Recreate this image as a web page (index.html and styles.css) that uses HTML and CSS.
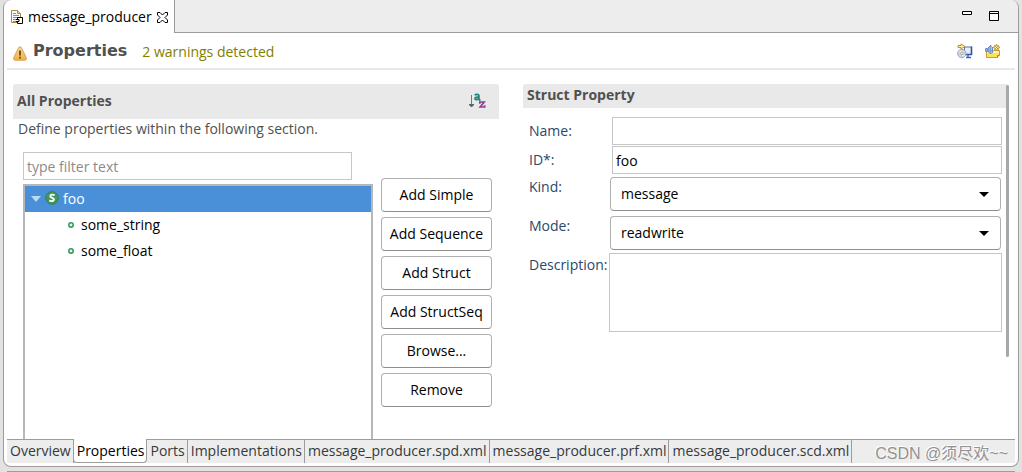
FILE: index.html
```html
<!DOCTYPE html>
<html lang="en">
<head>
<meta charset="utf-8">
<title>message_producer</title>
<link rel="stylesheet" href="styles.css">
</head>
<body>
<div class="editor">
  <div class="tabbar">
    <div class="file-tab">
      <svg class="icon-file" width="12" height="16" viewBox="0 0 12 16"><path d="M.5 1.500h6l3 3v9h-9z" fill="#f4f8ff" stroke="#b08a3c"/><path d="M6.500 1.500v3h3" fill="#f1d48b" stroke="#b08a3c"/><path d="M2 4.500h3M2 6.500h6M2 8.500h6M2 10.500h4M2 12.500h3" stroke="#6c93cf"/><path d="M6.500 8.500h5v6h-5z" fill="#fff" stroke="#000"/><path d="M5 10.500h3v2H5" fill="#fff" stroke="#000"/></svg>
      <span class="file-name">message_producer</span>
      <button class="icon-button" aria-label="Close"><svg width="11" height="11" viewBox="0 0 11 11"><path d="M.5.5h2.500l2.500 2.500L8 .5h2.500V3L8 5.500 10.500 8v2.500H8L5.500 8 3 10.500H.5V8L3 5.500.5 3z" fill="#fff" stroke="#000"/></svg></button>
    </div>
    <div class="tab-rest">
      <button class="icon-button" aria-label="Minimize"><svg width="10" height="10" viewBox="0 0 10 10"><path d="M.5.500h9v3h-9z" fill="#fff" stroke="#000"/></svg></button>
      <button class="icon-button" aria-label="Maximize"><svg width="10" height="10" viewBox="0 0 10 10"><path d="M.5.500h9v9h-9zM.5 2.500h9" fill="#fff" stroke="#000"/></svg></button>
    </div>
  </div>

  <header class="form-head">
    <svg class="icon-warning" width="14" height="15" viewBox="0 0 14 15"><defs><linearGradient id="amber" x1="0" y1="0" x2="0" y2="1"><stop offset="0" stop-color="#f8dc98"/><stop offset="1" stop-color="#f3ae45"/></linearGradient></defs><path d="M7 .8c.8 0 1.200.5 1.600 1.300l4.600 9.400c.7 1.600.1 2.700-1.400 2.700H2.200c-1.500 0-2.100-1.100-1.400-2.700l4.600-9.400C5.800 1.300 6.200.8 7 .8z" fill="url(#amber)" stroke="#dba055"/><path d="M7 4.500v5M7 10.800v1.700" stroke="#4c3a1b" stroke-width="1.600"/></svg>
    <h1 class="form-title">Properties</h1>
    <a class="warnings" href="#all">2 warnings detected</a>
    <div class="head-actions">
      <button class="icon-button" aria-label="Generate"><svg width="16" height="16" viewBox="0 0 16 16"><path d="M7.500 4h7v7.500h-7z" fill="#e5edfb" stroke="#4a78c4"/><path d="M14.500 3.500v8.500M8 11.500h7" stroke="#2a559f" stroke-width="1.600"/><path d="M11 12v2M9 14.500h5" stroke="#3768ad" stroke-width="1.400"/><circle cx="4.800" cy="10.500" r="4.200" fill="#d4d0ea" stroke="#a3a1c4"/><path d="M2.500 8l2 1.500M5.500 12l2 1" stroke="#f7f6cf" stroke-width="1.300"/><circle cx="4.800" cy="10.500" r="1.200" fill="#fff" stroke="#96ad86"/><path d="M1 4.500V2.500h3V.9l3.800 2.600L4 6V4.500z" fill="#fff0a8" stroke="#c09232"/></svg></button>
      <button class="icon-button" aria-label="Release"><svg width="16" height="16" viewBox="0 0 16 16"><path d="M1.500 7.500h13v5l-2 2h-11z" fill="#ffe34d" stroke="#cc9c28"/><path d="M2 8h10l2 1v1H2z" fill="#fff6a9"/><path d="M12.500 14.500v-2h2" fill="#fff" stroke="#b98313"/><path d="M.6 5.500h2v3h-2zM3 5l3-3v9L3 8.500z" fill="#8fb1e0" stroke="#6b90c9"/><path d="M7.500 4v6" stroke="#6b90c9"/><path d="M11.500 1l1 2.300L15 4.500l-2.500 1.200-1 2.300-1-2.300L8 4.500l2.500-1.200z" fill="#fff0a8" stroke="#c09232"/><path d="M9 2l5 5M14 2L9 7" stroke="#b58722" stroke-width=".7"/></svg></button>
    </div>
  </header>

  <main class="form-body">
    <section class="section" id="all">
      <div class="section-head section-head-tall">
        <h2 class="section-title">All Properties</h2>
        <button class="icon-button" aria-label="Sort alphabetically"><svg width="17" height="16" viewBox="0 0 17 16"><path d="M2.500 2v11" stroke="#5580a8"/><path d="M0 11h5v1L3 14H2l-2-2z" fill="#5c6478"/><path d="M5.800 2.300C6.400 1.300 9.900.8 9.900 3v4M9.900 4.200C7.500 4 6 4.500 6 5.700s2.500 1.300 3.900 0M9.900 7h1.600" fill="none" stroke="#21857c" stroke-width="1.800"/><path d="M10.800 10.800V9h4.400l-4 5h4.500v-1.800" fill="none" stroke="#8b3f98" stroke-width="1.700"/></svg></button>
      </div>
      <p class="description">Define properties within the following section.</p>
      <div class="property-area">
        <div class="tree-column">
          <input class="field filter" type="text" placeholder="type filter text" aria-label="Filter properties">
          <ul class="tree" role="tree" aria-label="Properties">
            <li class="tree-row selected" role="treeitem" aria-selected="true" aria-expanded="true">
              <svg width="10" height="6" viewBox="0 0 10 6"><path d="M0 0h10L5 6z" fill="#b9d9f5"/></svg>
              <svg class="icon-struct" width="14" height="14" viewBox="0 0 14 14"><circle cx="7" cy="7" r="6.300" fill="#43975a" stroke="#2f8250"/><path d="M9.600 4.200C8 3.200 5.300 3.500 5.300 5.200c0 2.100 3.700 1.200 3.600 3.200-.1 1.900-2.900 2.100-4.600 1.100" fill="none" stroke="#fff" stroke-width="1.900"/></svg>
              <span>foo</span>
            </li>
            <li class="tree-row child" role="treeitem"><svg width="6" height="6" viewBox="0 0 6 6"><circle cx="3" cy="3" r="2.200" fill="#e7f5ea" stroke="#2d975a" stroke-width="1.500"/></svg><span>some_string</span></li>
            <li class="tree-row child" role="treeitem"><svg width="6" height="6" viewBox="0 0 6 6"><circle cx="3" cy="3" r="2.200" fill="#e7f5ea" stroke="#2d975a" stroke-width="1.500"/></svg><span>some_float</span></li>
          </ul>
        </div>
        <div class="button-column">
          <button class="push">Add Simple</button>
          <button class="push">Add Sequence</button>
          <button class="push">Add Struct</button>
          <button class="push">Add StructSeq</button>
          <button class="push">Browse...</button>
          <button class="push">Remove</button>
        </div>
      </div>
    </section>

    <section class="section detail">
      <div class="section-head">
        <h2 class="section-title">Struct Property</h2>
      </div>
      <form class="property-form">
        <div class="form-row text-row"><label for="name">Name:</label><input class="field" id="name" type="text"></div>
        <div class="form-row text-row"><label for="ident">ID*:</label><input class="field" id="ident" type="text" value="foo"></div>
        <div class="form-row select-row"><label for="kind">Kind:</label><div class="combo"><select id="kind"><option>message</option></select></div></div>
        <div class="form-row select-row"><label for="mode">Mode:</label><div class="combo"><select id="mode"><option>readwrite</option></select></div></div>
        <div class="form-row area-row"><label for="desc">Description:</label><textarea class="field" id="desc"></textarea></div>
      </form>
      <div class="scroll-thumb"></div>
    </section>
  </main>

  <nav class="page-tabs">
    <a href="#overview">Overview</a>
    <a class="current" href="#properties">Properties</a>
    <a href="#ports">Ports</a>
    <a href="#implementations">Implementations</a>
    <a href="#spd">message_producer.spd.xml</a>
    <a href="#prf">message_producer.prf.xml</a>
    <a href="#scd">message_producer.scd.xml</a>
  </nav>
</div>
<div class="next-panel"></div>
<div class="watermark">CSDN @须尽欢~~</div>
</body>
</html>
```
FILE: styles.css
```css
* {
  box-sizing: border-box;
}

body {
  position: relative;
  display: flex;
  flex-direction: column;
  gap: 4px;
  height: 100vh;
  margin: 0;
  padding: 0 3px;
  overflow: hidden;
  background: #e2e2e2;
  color: #000;
  font: 14px/20px "Open Sans", "Noto Sans", sans-serif;
}

button,
input,
select,
textarea {
  font: inherit;
  color: inherit;
}

h1,
h2,
p,
ul {
  margin: 0;
  padding: 0;
}

svg {
  display: block;
  flex: none;
}

.editor {
  display: flex;
  flex: 1;
  flex-direction: column;
  min-height: 0;
  overflow: hidden;
  background: #fff;
  border: 1px solid #9c9c9c;
  border-top: 0;
  border-radius: 8px;
}

.next-panel {
  height: 1px;
  margin: 0 4px;
  background: #9c9c9c;
}

.icon-button {
  padding: 0;
  background: none;
  border: 0;
}

.tabbar {
  display: flex;
  flex: none;
  height: 33px;
}

.file-tab {
  display: flex;
  align-items: center;
  gap: 5px;
  padding: 1px 6px 0 7px;
}

.file-name {
  white-space: nowrap;
}

.tab-rest {
  display: flex;
  flex: 1;
  justify-content: flex-end;
  gap: 17px;
  padding: 11px 19px 0 0;
  background: #ededed;
  border: solid #9c9c9c;
  border-width: 0 0 1px 1px;
  border-radius: 0 8px 0 0;
}

.tab-rest .icon-button {
  height: 10px;
}

.form-head {
  display: flex;
  flex: none;
  align-items: center;
  height: 37px;
  margin: 0 3px;
  padding: 0 14px 0 6px;
  border-bottom: 2px solid #e8e8e8;
}

.icon-warning {
  margin-top: 6px;
}

.form-title {
  margin: 0 15px 0 6px;
  color: #505050;
  font: bold 16px/20px "DejaVu Sans", sans-serif;
}

.warnings {
  padding-top: 2px;
  color: #808000;
  text-decoration: none;
}

.head-actions {
  display: flex;
  gap: 12px;
  margin-left: auto;
}

.form-body {
  display: grid;
  flex: 1;
  grid-template-columns: 1fr 1fr;
  gap: 24px;
  min-height: 0;
  padding: 14px 9px 0;
}

.section {
  display: flex;
  flex-direction: column;
  min-height: 0;
}

.section-head {
  display: flex;
  flex: none;
  align-items: center;
  justify-content: space-between;
  height: 24px;
  padding: 0 13px 2px 4px;
  background: #e9e9e9;
  border-radius: 3px 3px 0 0;
}

.section-head-tall {
  height: 35px;
}

.section-title {
  color: #505050;
  font-size: 14px;
  line-height: 20px;
}

.description {
  padding: 0 5px;
  color: #505050;
}

.property-area {
  display: flex;
  flex: 1;
  gap: 8px;
  min-height: 0;
  padding: 13px 7px 0 10px;
}

.tree-column {
  display: flex;
  flex: 1;
  flex-direction: column;
  gap: 4px;
}

.field {
  width: 100%;
  height: 28px;
  padding: 0 3px;
  background: #fff;
  border: 1px solid #c6c6c6;
  border-radius: 0;
  outline: 0;
}

.filter {
  width: 94%;
  flex: none;
}

.filter::placeholder {
  color: #8b8b8b;
}

.tree {
  flex: 1;
  list-style: none;
  border: 2px solid #b7b7b7;
  border-bottom: 0;
}

.tree-row {
  display: flex;
  align-items: center;
  gap: 4px;
  height: 26px;
  padding-left: 6px;
}

.tree-row.selected {
  background: #4a90d9;
  color: #fff;
}

.tree-row.child {
  gap: 7px;
  padding-left: 43px;
}

.icon-struct {
  margin-bottom: 3px;
}

.button-column {
  display: flex;
  flex: none;
  flex-direction: column;
  gap: 5px;
  width: 111px;
  padding-top: 26px;
}

.push {
  height: 34px;
  padding: 0;
  background: #fff;
  border: 1px solid #b0b0b0;
  border-bottom-color: #8f8f8a;
  border-radius: 4px;
  white-space: nowrap;
}

.detail {
  position: relative;
}

.property-form {
  padding: 9px 7px 0 6px;
}

.form-row {
  display: grid;
  grid-template-columns: 80px 1fr;
  color: #29486c;
}

.form-row input,
.form-row select,
.form-row textarea {
  color: #000;
}

.text-row {
  margin-bottom: 1px;
}

.text-row label {
  padding-top: 4px;
}

.text-row .field {
  justify-self: end;
  width: calc(100% - 3px);
}

.select-row {
  padding: 2px 0 3px;
}

.combo {
  position: relative;
  padding: 0 1px;
}

.combo::after {
  position: absolute;
  top: 15px;
  right: 13px;
  border: solid transparent;
  border-width: 5px 5px 0;
  border-top-color: #000;
  content: "";
  pointer-events: none;
}

.combo select {
  display: block;
  width: 100%;
  height: 34px;
  padding: 0 10px;
  appearance: none;
  background: #fff;
  border: 1px solid #b0b0b0;
  border-bottom-color: #8f8f8a;
  border-radius: 4px;
}

.area-row label {
  padding-top: 2px;
}

.area-row .field {
  display: block;
  height: 79px;
  resize: none;
}

.scroll-thumb {
  position: absolute;
  top: 1px;
  right: 0;
  width: 3px;
  height: 272px;
  background: #a5a9a9;
  border-radius: 2px;
}

.page-tabs {
  display: flex;
  flex: none;
  height: 24px;
  margin: 0 3px 3px;
  background: #ededed;
  border-top: 1px solid #9c9c9c;
}

.page-tabs a {
  padding: 1px 2px 0 3px;
  border-right: 1px solid #9c9c9c;
  color: #36393b;
  text-decoration: none;
  white-space: nowrap;
}

.page-tabs .current {
  margin: -1px 0 0 -1px;
  padding-top: 2px;
  background: #fff;
  border: solid #9c9c9c;
  border-width: 0 1px 1px;
  border-radius: 0 0 4px 4px;
  color: #000;
}

.watermark {
  position: absolute;
  right: 14px;
  bottom: 6px;
  color: #929292;
  font: 16px/24px "Liberation Sans", "Noto Sans CJK SC", sans-serif;
  text-shadow: -1px -1px 0 #fff;
}
```
